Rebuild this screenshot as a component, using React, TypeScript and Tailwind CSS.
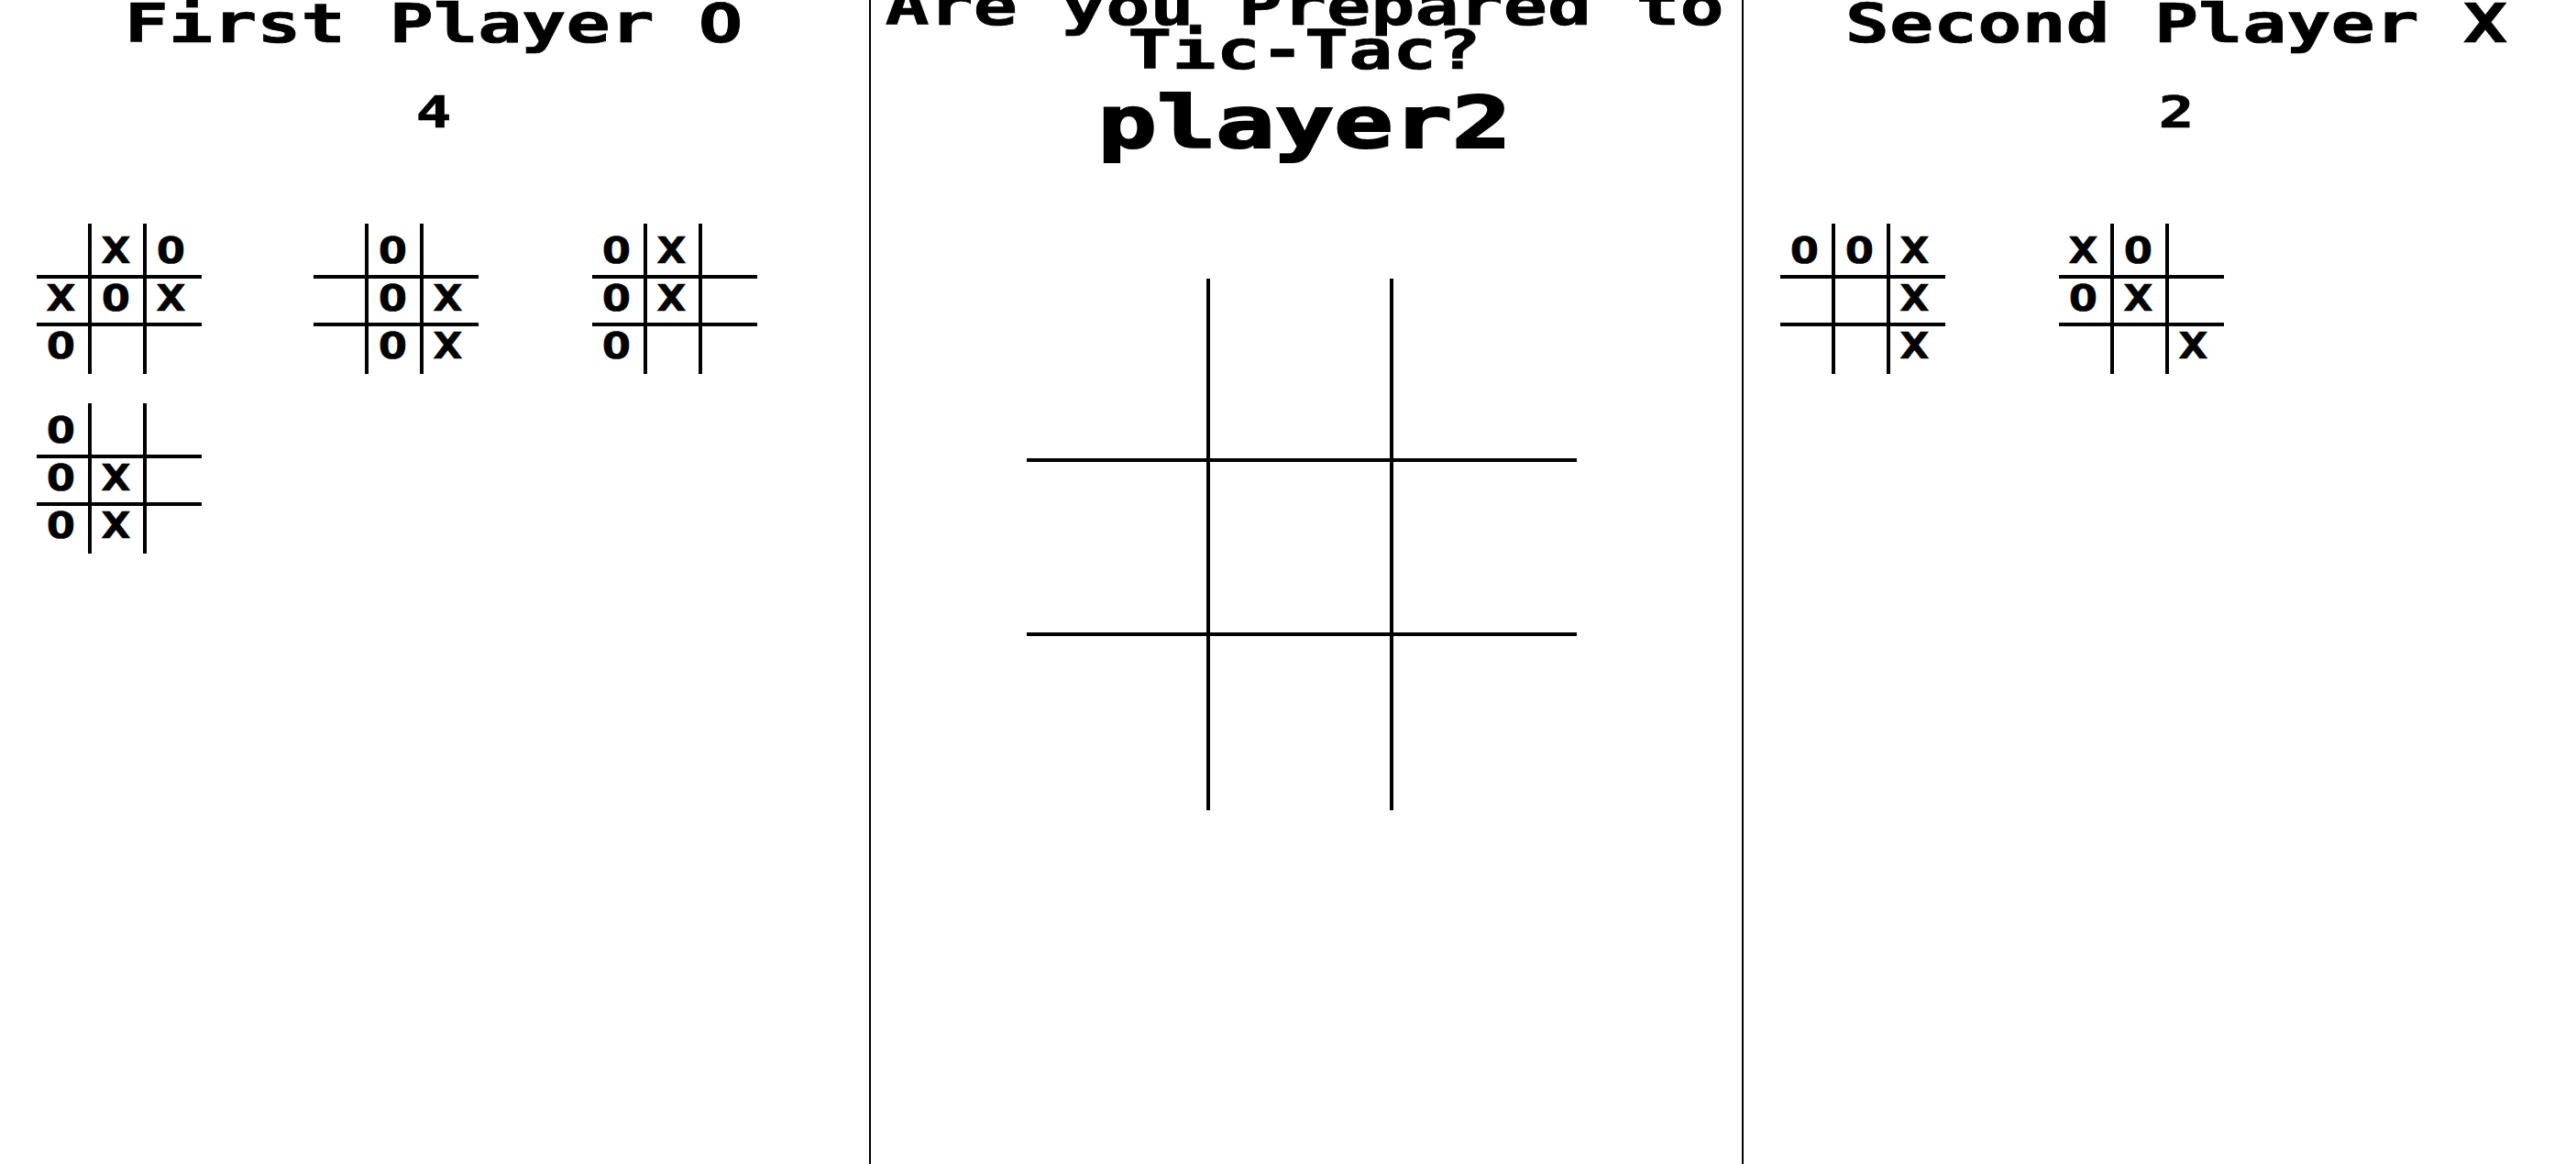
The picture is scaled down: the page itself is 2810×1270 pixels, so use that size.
import React from 'react';

type Mark = 'X' | 'O' | '';

const leftBoards: Mark[][] = [
  ['', 'X', 'O', 'X', 'O', 'X', 'O', '', ''],
  ['', 'O', '', '', 'O', 'X', '', 'O', 'X'],
  ['O', 'X', '', 'O', 'X', '', 'O', '', ''],
  ['O', '', '', 'O', 'X', '', 'O', 'X', ''],
];

const rightBoards: Mark[][] = [
  ['O', 'O', 'X', '', '', 'X', '', '', 'X'],
  ['X', 'O', '', 'O', 'X', '', '', '', 'X'],
];

const fontClass = "font-['DejaVu_Sans_Mono',monospace] font-bold text-black [-webkit-text-stroke:1px_black]";

// last column and last row have no line, padding keeps the cell content in the same spot
const cellBorders = (i: number) =>
  (i % 3 === 2 ? 'pr-1 ' : 'border-r-4 ') + (i >= 6 ? 'pb-1' : 'border-b-4');

const MiniBoard: React.FC<{ cells: Mark[] }> = ({ cells }) => (
  <div className="grid w-[180px] grid-cols-[60px_60px_60px] grid-rows-[60px_52px_52px]">
    {cells.map((mark, i) => (
      <div
        key={i}
        className={`flex items-end justify-center overflow-hidden border-black ${cellBorders(i)}`}
      >
        <span className={`${fontClass} mr-[3px] mb-[-4px] block h-[60px] scale-y-[0.74] text-[52px] leading-[60px]`}>
          {mark}
        </span>
      </div>
    ))}
  </div>
);

const MainBoard: React.FC = () => (
  <div className="grid w-[600px] grid-cols-[200px_200px_200px] grid-rows-[200px_190px_190px]">
    {Array.from({ length: 9 }).map((_, i) => (
      <button key={i} className={`border-black ${cellBorders(i)}`} />
    ))}
  </div>
);

const PlayerColumn: React.FC<{
  title: string;
  score: number;
  boards: Mark[][];
  className: string;
  gridClass: string;
}> = ({ title, score, boards, className, gridClass }) => (
  <section className={`shrink-0 ${className}`}>
    <h2 className={`${fontClass} mt-[-14px] h-[80px] scale-y-[0.74] text-center text-[80px] leading-[80px]`}>
      {title}
    </h2>
    <p className={`${fontClass} mt-[25px] h-[64px] scale-y-[0.74] text-center text-[64px] leading-[64px]`}>
      {score}
    </p>
    <div className={`mt-[89px] grid gap-y-[32px] pl-[40px] ${gridClass}`}>
      {boards.map((cells, i) => (
        <MiniBoard key={i} cells={cells} />
      ))}
    </div>
  </section>
);

export default function App() {
  return (
    <div className="flex h-[1270px] w-[2810px] overflow-hidden bg-white">
      <PlayerColumn
        title="First Player O"
        score={4}
        boards={leftBoards}
        className="w-[950px] border-r-2 border-black pr-[2px]"
        gridClass="grid-cols-[302px_304px_180px]"
      />

      <main className="w-[952px] shrink-0 border-r-2 border-black pr-[4px]">
        <h1 className={`${fontClass} mt-[-34px] scale-y-[0.74] text-center text-[80px] leading-[65px]`}>
          Are you Prepared to
          <br />
          Tic-Tac?
        </h1>
        <p className={`${fontClass} mt-[-16px] h-[107px] scale-y-[0.74] text-center text-[107px] leading-[107px] [-webkit-text-stroke:3px_black]`}>
          player2
        </p>
        <div className="mt-[117px] ml-[170px]">
          <MainBoard />
        </div>
      </main>

      <PlayerColumn
        title="Second Player X"
        score={2}
        boards={rightBoards}
        className="w-[944px]"
        gridClass="grid-cols-[304px_180px]"
      />
    </div>
  );
}
